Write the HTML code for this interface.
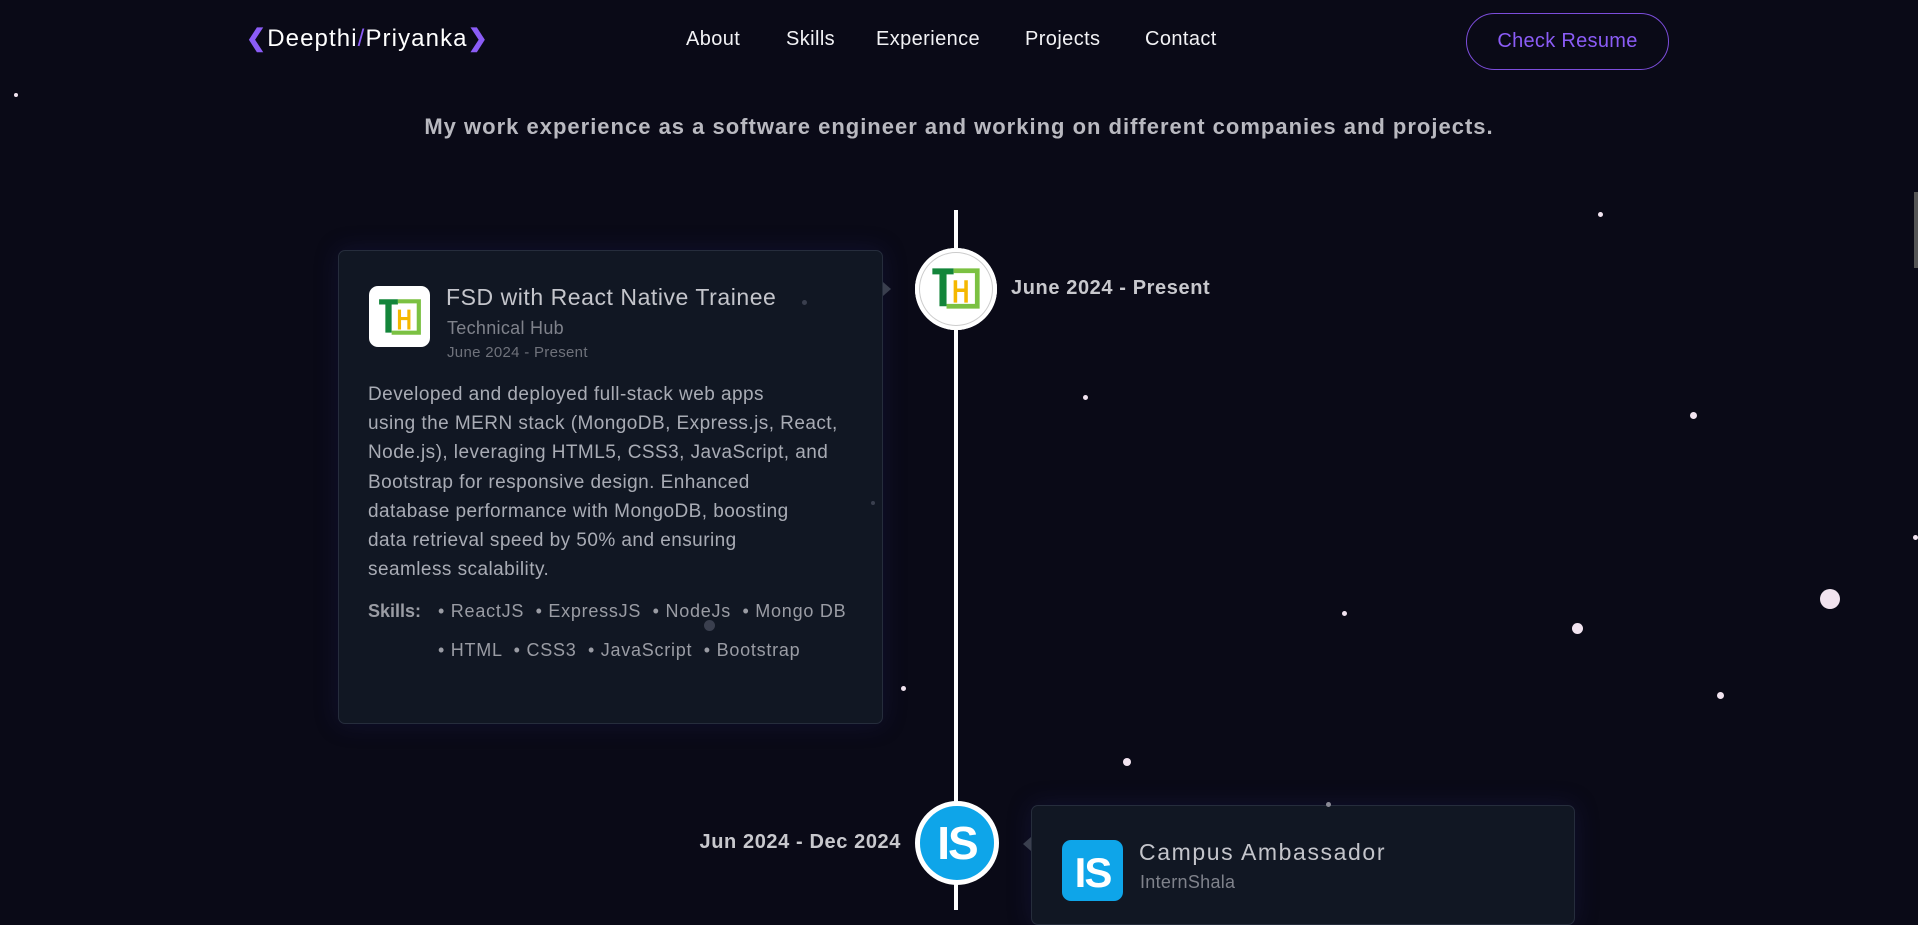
<!DOCTYPE html>
<html><head><meta charset="utf-8"><style>
*{margin:0;padding:0;box-sizing:border-box}
html,body{width:1918px;height:898px;overflow:hidden;background:#0a0a17;font-family:"Liberation Sans",sans-serif}
.a{position:absolute;white-space:nowrap}
.star{position:absolute;border-radius:50%;background:#f2e4f0}
.nav{color:#f2f2f5;font-size:20px;top:28px;letter-spacing:0.4px}
.card{position:absolute;background:#111723;border:1px solid #262d3c;border-radius:7px;box-shadow:0 0 24px rgba(40,40,120,.25)}
.dim{color:#a9acb5}
</style></head><body>
<div class="a" style="left:246px;top:24px;font-size:24px;color:#fff;letter-spacing:1.1px"><span style="color:#8b5cf6;font-weight:bold">&#10094;</span>Deepthi<span style="color:#8b5cf6">/</span>Priyanka<span style="color:#8b5cf6;font-weight:bold">&#10095;</span></div>
<div class="a nav" style="left:686px">About</div>
<div class="a nav" style="left:786px">Skills</div>
<div class="a nav" style="left:876px">Experience</div>
<div class="a nav" style="left:1025px">Projects</div>
<div class="a nav" style="left:1145px">Contact</div>
<div class="a" style="left:1466px;top:13px;width:203px;height:57px;border:1px solid #7c4ddb;border-radius:29px;color:#8b5cf6;font-size:20px;text-align:center;line-height:55px;letter-spacing:0.3px">Check Resume</div>
<div class="a" style="left:0;width:1918px;text-align:center;top:114px;font-size:22px;font-weight:bold;color:#b9b9c0;letter-spacing:1px">My work experience as a software engineer and working on different companies and projects.</div>
<div class="star" style="left:14px;top:93px;width:4px;height:4px"></div>
<div class="star" style="left:1598px;top:212px;width:5px;height:5px"></div>
<div class="star" style="left:1083px;top:395px;width:5px;height:5px"></div>
<div class="star" style="left:1690px;top:412px;width:7px;height:7px"></div>
<div class="star" style="left:1913px;top:535px;width:5px;height:5px"></div>
<div class="star" style="left:1820px;top:589px;width:20px;height:20px"></div>
<div class="star" style="left:1342px;top:611px;width:5px;height:5px"></div>
<div class="star" style="left:1572px;top:623px;width:11px;height:11px"></div>
<div class="star" style="left:1717px;top:692px;width:7px;height:7px"></div>
<div class="star" style="left:901px;top:686px;width:5px;height:5px"></div>
<div class="star" style="left:1123px;top:758px;width:8px;height:8px"></div>
<div class="a" style="left:954px;top:210px;width:4px;height:700px;background:#fff"></div>
<div class="card" style="left:338px;top:250px;width:545px;height:474px"></div>
<div class="a" style="left:883px;top:282px;border-left:8px solid #3a3f4e;border-top:7px solid transparent;border-bottom:7px solid transparent"></div>
<div class="star" style="left:802px;top:300px;width:5px;height:5px;background:#3a3f4e"></div>
<div class="star" style="left:871px;top:501px;width:4px;height:4px;background:#3a3f4e"></div>
<div class="star" style="left:704px;top:620px;width:11px;height:11px;background:#3a3f4e"></div>
<div class="a" style="left:369px;top:286px;width:61px;height:61px;background:#fff;border-radius:9px"></div>
<svg class="a" style="left:377px;top:297px" width="46" height="40" viewBox="0 0 44 38"><path d="M2 2h18v5h-6v27h-6V7H2z" fill="#13853a"/><path d="M20 2h22v34H14v-4h24V6H20z" fill="#7bc142"/><path d="M20 12h3v7h6v-7h3v19h-3v-9h-6v9h-3z" fill="#f5b800"/></svg>
<div class="a" style="left:446px;top:284px;font-size:23px;color:#c4c5cb;letter-spacing:0.55px">FSD with React Native Trainee</div>
<div class="a" style="left:447px;top:318px;font-size:18px;color:#7f828b;letter-spacing:0.3px">Technical Hub</div>
<div class="a" style="left:447px;top:344px;font-size:15px;color:#6f727b;letter-spacing:0.3px">June 2024 - Present</div>
<div class="a dim" style="left:368px;top:380px;font-size:19px;line-height:29.2px;letter-spacing:0.45px">Developed and deployed full-stack web apps<br>using the MERN stack (MongoDB, Express.js, React,<br>Node.js), leveraging HTML5, CSS3, JavaScript, and<br>Bootstrap for responsive design. Enhanced<br>database performance with MongoDB, boosting<br>data retrieval speed by 50% and ensuring<br>seamless scalability.</div>
<div class="a" style="left:368px;top:601px;font-size:18px;color:#9a9ca4;font-weight:bold">Skills:</div>
<div class="a" style="left:438px;top:601px;font-size:18px;color:#9a9ca4;letter-spacing:0.75px">• ReactJS &nbsp;• ExpressJS &nbsp;• NodeJs &nbsp;• Mongo DB</div>
<div class="a" style="left:438px;top:640px;font-size:18px;color:#9a9ca4;letter-spacing:0.75px">• HTML &nbsp;• CSS3 &nbsp;• JavaScript &nbsp;• Bootstrap</div>
<div class="a" style="left:915px;top:248px;width:82px;height:82px;border-radius:50%;background:#fff;box-shadow:inset 0 0 0 4px #fff,inset 0 0 0 5px #ccc"></div>
<svg class="a" style="left:930px;top:266px" width="52" height="45" viewBox="0 0 44 38"><path d="M2 2h18v5h-6v27h-6V7H2z" fill="#13853a"/><path d="M20 2h22v34H14v-4h24V6H20z" fill="#7bc142"/><path d="M20 12h3v7h6v-7h3v19h-3v-9h-6v9h-3z" fill="#f5b800"/></svg>
<div class="a" style="left:1011px;top:277px;font-size:20px;font-weight:bold;color:#c8c8cd;letter-spacing:0.6px">June 2024 - Present</div>
<div class="a" style="left:915px;top:801px;width:84px;height:84px;border-radius:50%;background:#0ea5e9;border:5px solid #fff;color:#fff;font-size:46px;font-weight:bold;text-align:center;line-height:74px;letter-spacing:-2px">IS</div>
<div class="a" style="right:1017px;top:831px;font-size:20px;font-weight:bold;color:#c8c8cd;letter-spacing:0.6px">Jun 2024 - Dec 2024</div>
<div class="card" style="left:1031px;top:805px;width:544px;height:120px"></div>
<div class="a" style="left:1023px;top:837px;border-right:8px solid #3a3f4e;border-top:7px solid transparent;border-bottom:7px solid transparent"></div>
<div class="star" style="left:1326px;top:802px;width:5px;height:5px;background:#8a8a95"></div>
<div class="a" style="left:1062px;top:840px;width:61px;height:61px;background:#0ea5e9;border-radius:9px;color:#fff;font-size:42px;font-weight:bold;text-align:center;line-height:66px;letter-spacing:-2px;overflow:hidden">IS</div>
<div class="a" style="left:1139px;top:839px;font-size:23px;color:#c4c5cb;letter-spacing:1.6px">Campus Ambassador</div>
<div class="a" style="left:1140px;top:872px;font-size:18px;color:#7f828b;letter-spacing:0.3px">InternShala</div>
<div class="a" style="left:1914px;top:192px;width:4px;height:76px;background:#555"></div>
</body></html>
